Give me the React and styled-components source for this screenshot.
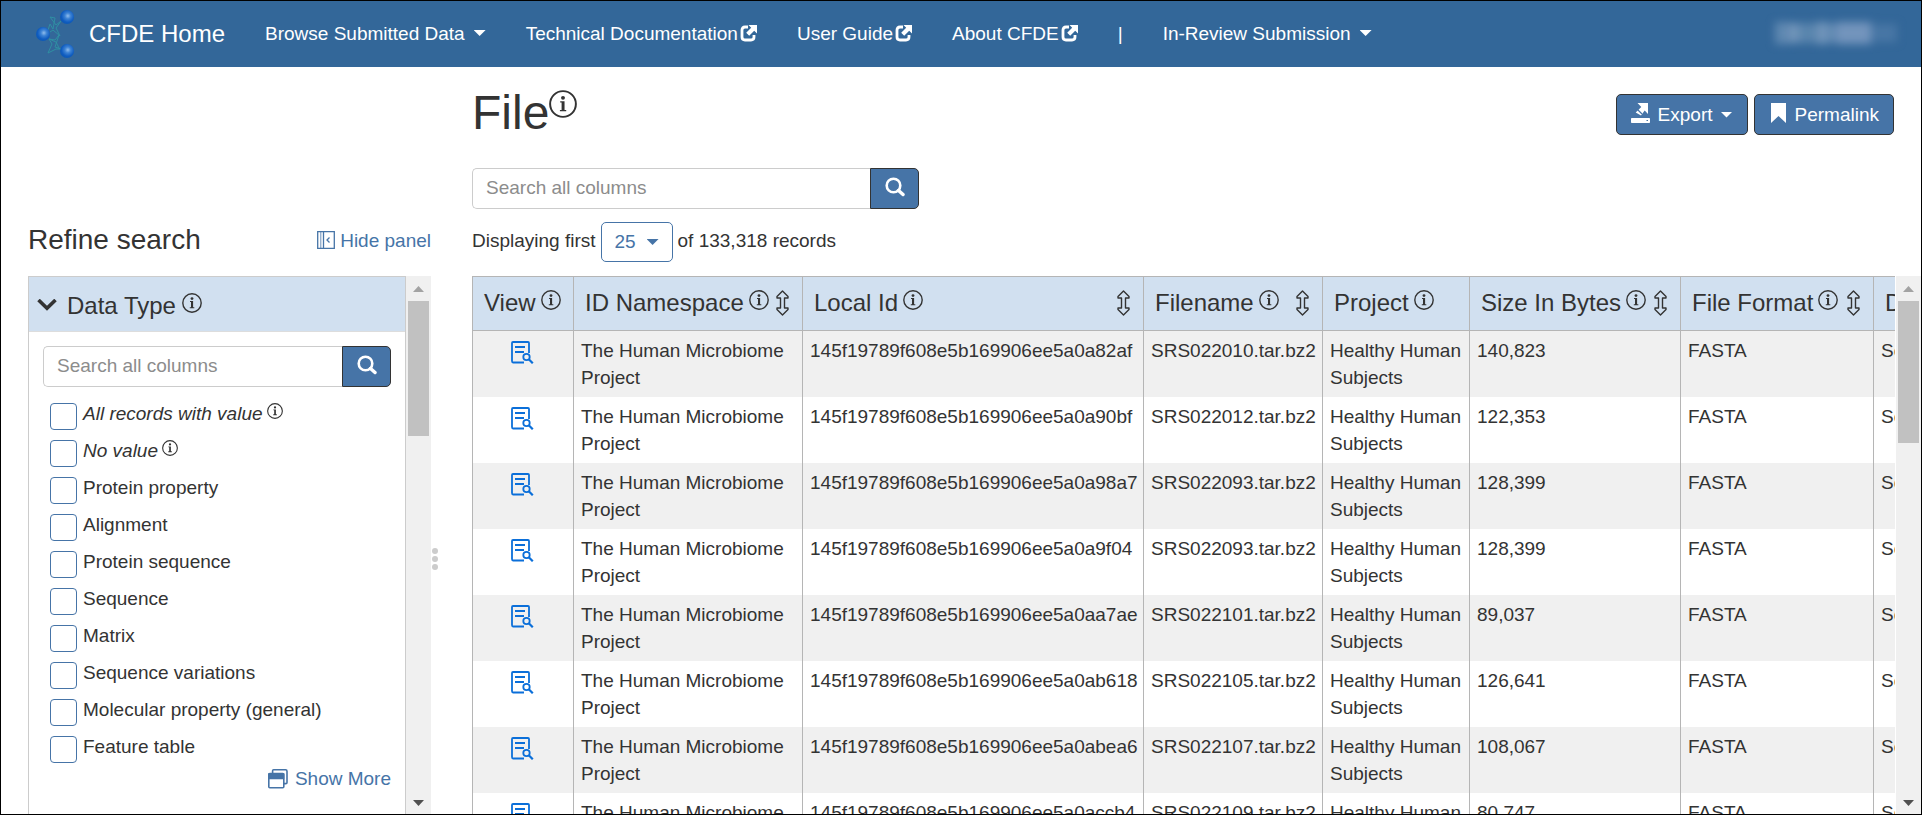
import React from 'react';
import styled, { createGlobalStyle, css } from 'styled-components';

const Global = createGlobalStyle`
  *, *::before, *::after { box-sizing: border-box; }
  body {
    margin: 0;
    background: #fff;
    color: #333;
    font-family: "Liberation Sans", Arial, Helvetica, sans-serif;
    font-size: 19px;
    line-height: 27px;
  }
  button, input, select { font: inherit; }
  h1, h2, h3 { margin: 0; font-weight: 400; }
  a { text-decoration: none; }
  svg { display: block; flex: none; }
`;

const Shell = styled.div`
  height: 100vh;
  display: flex;
  flex-direction: column;
  overflow: hidden;
  border: 1px solid #000;
`;

const NavBar = styled.nav`
  flex: none;
  height: 66px;
  display: flex;
  align-items: center;
  gap: 40px;
  padding: 0 24px 2px 33px;
  background: #336799;
  color: #fff;
  white-space: nowrap;
`;

const Brand = styled.a`
  display: flex;
  align-items: center;
  gap: 14px;
  color: #fff;
  font-size: 24px;
`;

const NavLink = styled.a`
  display: flex;
  align-items: center;
  gap: 2px;
  color: #fff;
`;

const NavMenu = styled.button`
  display: flex;
  align-items: center;
  gap: 9px;
  padding: 0;
  border: 0;
  background: none;
  color: #fff;
`;

const Caret = styled.span`
  width: 12px;
  height: 6px;
  background: currentColor;
  clip-path: polygon(0 0, 100% 0, 50% 100%);
`;

const UserName = styled.div`
  display: flex;
  align-items: center;
  margin-left: auto;
  filter: blur(4px);
`;

const Smudge = styled.span`
  width: ${(p) => p.$w}px;
  height: ${(p) => p.$h}px;
  background: ${(p) => p.$c};
`;

const Content = styled.main`
  flex: 1;
  min-height: 0;
  display: grid;
  grid-template-columns: 403px 8px minmax(0, 1fr);
  grid-template-rows: auto minmax(0, 1fr);
  padding-left: 27px;
`;

const SideHead = styled.div`
  display: flex;
  align-items: center;
  justify-content: space-between;
  align-self: end;
  height: 40px;
  margin-bottom: 16px;
`;

const SideTitle = styled.h2`
  font-size: 28px;
  line-height: 40px;
`;

const TextButton = styled.button`
  display: flex;
  align-items: center;
  gap: ${(p) => p.$gap}px;
  padding: 0;
  border: 0;
  background: none;
  color: #4674a7;
`;

const MainHead = styled.div`
  grid-column: 3;
  padding: 20px 27px 14px 33px;
`;

const TitleRow = styled.div`
  display: flex;
  justify-content: space-between;
  margin-bottom: 29px;
`;

const Title = styled.h1`
  display: flex;
  font-size: 48px;
  line-height: 52px;
  svg { margin-top: 3px; }
`;

const Actions = styled.div`
  display: flex;
  gap: 6px;
  margin: 7px 0 4px;
`;

const ActionButton = styled.button`
  display: flex;
  align-items: center;
  gap: 8px;
  height: 41px;
  padding: 0 14px;
  border: 1px solid #333;
  border-radius: 5px;
  background: #4674a7;
  color: #fff;
  svg { margin-bottom: 3px; }
`;

const SearchForm = styled.form`
  display: flex;
  width: ${(p) => p.$width};
  height: 41px;
`;

const SearchInput = styled.input`
  flex: 1;
  min-width: 0;
  padding: 0 13px 2px;
  border: 1px solid #ccc;
  border-right: 0;
  border-radius: 5px 0 0 5px;
  background: #fff;
  color: #333;
  &::placeholder { color: #8c8c8c; opacity: 1; }
`;

const SearchButton = styled.button`
  display: flex;
  justify-content: center;
  width: 49px;
  padding: 8px 0 0;
  border: 1px solid #333;
  border-radius: 0 5px 5px 0;
  background: #4674a7;
  color: #fff;
`;

const Summary = styled.div`
  display: flex;
  align-items: center;
  gap: 5px;
  height: 40px;
  margin-top: 13px;
`;

const SummaryText = styled.span`
  padding-bottom: 4px;
`;

const LimitPicker = styled.label`
  display: grid;
  align-items: center;
  color: #4674a7;
  > * { grid-area: 1 / 1; }
  ${Caret} { justify-self: end; margin-right: 14px; pointer-events: none; }
`;

const LimitSelect = styled.select`
  appearance: none;
  width: 72px;
  height: 40px;
  padding: 0 13px 2px;
  border: 1px solid #4674a7;
  border-radius: 5px;
  background: #fff;
  color: #4674a7;
`;

const SidePane = styled.aside`
  grid-column: 1;
  display: flex;
  min-height: 0;
`;

const FacetList = styled.div`
  flex: 1;
  overflow: hidden;
  border: 1px solid #ccc;
  border-bottom: 0;
`;

const FacetHead = styled.h3`
  display: flex;
  align-items: center;
  height: 55px;
  padding: 3px 8px 0;
  border-bottom: 1px solid #ddd;
  background: #d1e0f0;
  font-size: 24px;
`;

const FacetName = styled.span`
  margin: 0 6px 0 10px;
`;

const FacetBody = styled.div`
  padding: 14px 14px 0;
`;

const Options = styled.ul`
  display: flex;
  flex-direction: column;
  gap: 10px;
  margin: 16px 0 0;
  padding: 0 0 0 7px;
  list-style: none;
`;

const Option = styled.label`
  display: flex;
  height: 27px;
  gap: 6px;
  line-height: 22px;
  ${(p) => p.$special && css`font-style: italic;`}
`;

const Tick = styled.input`
  appearance: none;
  flex: none;
  width: 27px;
  height: 27px;
  margin: 0;
  border: 1px solid #4674a7;
  border-radius: 4px;
  background: #fff;
`;

const OptionName = styled.span`
  display: flex;
  gap: 4px;
`;

const More = styled.div`
  display: flex;
  justify-content: flex-end;
  margin-top: 2px;
`;

const Handle = styled.div`
  grid-column: 2;
  display: flex;
  flex-direction: column;
  align-items: center;
  justify-content: center;
  gap: 2px;
  padding-top: 28px;
`;

const Dot = styled.span`
  width: 6px;
  height: 6px;
  border-radius: 50%;
  background: #ccc;
`;

const ResultPane = styled.section`
  grid-column: 3;
  display: flex;
  gap: 1px;
  min-height: 0;
  padding-left: 33px;
`;

const TableClip = styled.div`
  flex: 1;
  min-width: 0;
  overflow: hidden;
`;

const Table = styled.table`
  width: 1602px;
  table-layout: fixed;
  border-collapse: separate;
  border-spacing: 0;
  border-left: 1px solid #b5b5b5;
`;

const Col = styled.col`
  width: ${(p) => p.$w}px;
`;

const Th = styled.th`
  height: 55px;
  padding: 0 13px 2px 11px;
  border: solid #b5b5b5;
  border-width: 1px 1px 1px 0;
  background: #d1e0f0;
  font-size: 24px;
  font-weight: 400;
  text-align: left;
  white-space: nowrap;
`;

const ThInner = styled.div`
  display: flex;
  align-items: center;
`;

const ThLabel = styled.span`
  margin-right: 5px;
`;

const IconUp = styled.span`
  padding-bottom: 5px;
`;

const SortButton = styled.button`
  margin-left: auto;
  padding: 0;
  border: 0;
  background: none;
  color: #333;
`;

const Row = styled.tr`
  &:nth-child(odd) { background: #f0f0f0; }
`;

const Td = styled.td`
  height: 66px;
  padding: 6px 0 6px 7px;
  border-right: 1px solid #b5b5b5;
  vertical-align: top;
`;

const ViewLink = styled.a`
  display: flex;
  justify-content: center;
  padding: 4px 9px 0 0;
  color: #0b6fd9;
`;

const Bar = styled.div`
  flex: none;
  display: flex;
  flex-direction: column;
  align-items: center;
  width: 25px;
  padding: 10px 0 8px;
  background: #f0f0f0;
`;

const Arrow = styled.span`
  width: 11px;
  height: 6px;
  background: ${(p) => (p.$up ? '#a3a3a3' : '#505050')};
  clip-path: ${(p) => (p.$up ? 'polygon(50% 0, 100% 100%, 0 100%)' : 'polygon(0 0, 100% 0, 50% 100%)')};
`;

const Thumb = styled.span`
  width: 21px;
  height: ${(p) => p.$h}px;
  margin: 9px 0 auto;
  background: #c1c1c1;
`;

function Scrollbar({ thumb }) {
  return (
    <Bar aria-hidden="true">
      <Arrow $up />
      <Thumb $h={thumb} />
      <Arrow />
    </Bar>
  );
}

function Logo() {
  return (
    <svg width="41" height="54" viewBox="0 0 41 54" aria-hidden="true">
      <defs>
        <radialGradient id="ball" cx="0.56" cy="0.42" r="0.6">
          <stop offset="0" stopColor="#8fbcec" />
          <stop offset="0.35" stopColor="#3c82d4" />
          <stop offset="0.75" stopColor="#0f5cc0" />
          <stop offset="1" stopColor="#0d58b4" />
        </radialGradient>
      </defs>
      <g fill="none" stroke="#2f8fa3" strokeWidth="1" strokeLinejoin="round">
        <path d="M14 24l2-6 3 5 2-11-5 -1 6 8 5-4-5 7 4 8-7-6-3 2" />
        <path d="M15 33l6 1 4-5-4 12 6 2-5 0-8 4 4-9-3-5 7 3 3 6" />
      </g>
      <circle cx="33" cy="11" r="7" fill="url(#ball)" />
      <circle cx="9" cy="28" r="7" fill="url(#ball)" />
      <circle cx="33" cy="45" r="7" fill="url(#ball)" />
    </svg>
  );
}

function External() {
  return (
    <svg width="17" height="17" viewBox="0 0 17 17" aria-hidden="true">
      <path d="M8 2H5Q2 2 2 5v7q0 3 3 3h6q3 0 3-3v-2" fill="none" stroke="#fff" strokeWidth="2.8" />
      <path d="M8.500 0H17v8.500l-2.800-2.800-5 5-3-3 5-5z" fill="#fff" />
    </svg>
  );
}

function Info({ size = 20 }) {
  return (
    <svg width={size} height={size} viewBox="0 0 20 20" role="img" aria-label="More information">
      <circle cx="10" cy="10" r="9.200" fill="none" stroke="currentColor" strokeWidth="1.400" />
      <circle cx="10" cy="5.600" r="1.400" fill="currentColor" />
      <path d="M8 8h3.100v6.200h1.200v1H7.800v-1H9V9H8z" fill="currentColor" />
    </svg>
  );
}

function Magnifier() {
  return (
    <svg width="20" height="20" viewBox="0 0 20 20" fill="none" stroke="currentColor" aria-hidden="true">
      <circle cx="8.500" cy="8.500" r="6.800" strokeWidth="2.600" />
      <path d="M13.500 13.500l4.500 4" strokeWidth="3.400" strokeLinecap="round" />
    </svg>
  );
}

function ExportIcon() {
  return (
    <svg width="19" height="20" viewBox="0 0 19 20" fill="#fff" aria-hidden="true">
      <path d="M6.500 0H17v11l-3.300-3.500-3.700 5-5.300-3 5.600-5.500z" />
      <path d="M6 6l5 5" stroke="#4674a7" strokeWidth="1.200" />
      <path d="M.8 15h17.400q.8 0 .8.800v3.400q0 .8-.8.800H.8q-.8 0-.8-.8v-3.400q0-.8.8-.8zM15.500 17v1H17v-1z" fillRule="evenodd" />
    </svg>
  );
}

function Bookmark() {
  return (
    <svg width="18" height="20" viewBox="0 0 18 20" aria-hidden="true">
      <path d="M2 0h15v20l-7.500-7L2 20z" fill="#fff" />
    </svg>
  );
}

function PanelIcon() {
  return (
    <svg width="18" height="18" viewBox="0 0 18 18" fill="none" stroke="currentColor" strokeWidth="1.300" aria-hidden="true">
      <path d="M.7.7h16.600v16.600H.7zM6.500 1v16M12.500 6.500L10 9l2.500 2.500" />
      <path d="M3.800 1v16" strokeWidth="0.800" />
    </svg>
  );
}

function Windows() {
  return (
    <svg width="20" height="20" viewBox="0 0 20 20" fill="none" stroke="currentColor" strokeWidth="1.600" aria-hidden="true">
      <path d="M4.600 4V1.800q0-1 1-1h12q1.400 0 1.400 1.400v11.200q0 1.200-1.200 1.200H16" />
      <path d="M.8 5.600q0-1 1-1h13q1 0 1 1v12.200q0 1-1 1h-13q-1 0-1-1z" />
      <path d="M1 5h14.500v4.500H1z" fill="currentColor" />
    </svg>
  );
}

function Chevron() {
  return (
    <svg width="20" height="13" viewBox="0 0 20 13" aria-hidden="true">
      <path d="M1.500 1L10 9.200 18.500 1" fill="none" stroke="#333" strokeWidth="3.600" />
    </svg>
  );
}

function SortIcon() {
  return (
    <svg width="13" height="26" viewBox="0 0 13 26" fill="none" stroke="currentColor" strokeWidth="1.400" strokeLinejoin="round" aria-hidden="true">
      <path d="M6.500 1L12 6.500V8H8.500v10H12v1.500L6.500 25 1 19.500V18h3.500V8H1V6.500z" />
    </svg>
  );
}

function ViewIcon() {
  return (
    <svg width="23" height="23" viewBox="0 0 23 23" fill="none" stroke="currentColor" strokeWidth="1.800" aria-hidden="true">
      <path d="M18 12V2q0-1-1-1H2Q1 1 1 2v18q0 1.500 1 1.500h11M4 6h10M4 11h9" />
      <circle cx="15.500" cy="16" r="3.200" />
      <path d="M17.800 18.300l4 4" strokeWidth="2.200" />
    </svg>
  );
}

function Search({ width, label }) {
  return (
    <SearchForm $width={width} role="search" onSubmit={(e) => e.preventDefault()}>
      <SearchInput type="text" placeholder="Search all columns" aria-label={label} />
      <SearchButton type="submit" aria-label="Search"><Magnifier /></SearchButton>
    </SearchForm>
  );
}

const options = [
  { name: 'All records with value', special: true },
  { name: 'No value', special: true },
  { name: 'Protein property' },
  { name: 'Alignment' },
  { name: 'Protein sequence' },
  { name: 'Sequence' },
  { name: 'Matrix' },
  { name: 'Sequence variations' },
  { name: 'Molecular property (general)' },
  { name: 'Feature table' },
];

const columns = [
  { name: 'View', width: 101 },
  { name: 'ID Namespace', width: 229, sort: true },
  { name: 'Local Id', width: 341, sort: true },
  { name: 'Filename', width: 179, sort: true },
  { name: 'Project', width: 147 },
  { name: 'Size In Bytes', width: 211, sort: true },
  { name: 'File Format', width: 193, sort: true },
  { name: 'Data Type', width: 200, sort: true },
];

const records = [
  ['0a82af', 'SRS022010', '140,823'],
  ['0a90bf', 'SRS022012', '122,353'],
  ['0a98a7', 'SRS022093', '128,399'],
  ['0a9f04', 'SRS022093', '128,399'],
  ['0aa7ae', 'SRS022101', '89,037'],
  ['0ab618', 'SRS022105', '126,641'],
  ['0abea6', 'SRS022107', '108,067'],
  ['0accb4', 'SRS022109', '80,747'],
];

export default function App() {
  return (
    <>
      <Global />
      <Shell>
        <NavBar>
          <Brand href="#home"><Logo />CFDE Home</Brand>
          <NavMenu type="button">Browse Submitted Data<Caret /></NavMenu>
          <NavLink href="#docs">Technical Documentation<External /></NavLink>
          <NavLink href="#guide">User Guide<External /></NavLink>
          <NavLink href="#about">About CFDE<External /></NavLink>
          <span>|</span>
          <NavMenu type="button">In-Review Submission<Caret /></NavMenu>
          <UserName aria-label="Signed-in user">
            <Smudge $w={14} $h={22} $c="#5f88b1" />
            <Smudge $w={10} $h={20} $c="#7194b9" />
            <Smudge $w={18} $h={20} $c="#5a85ae" />
            <Smudge $w={10} $h={22} $c="#7094ba" />
            <Smudge $w={10} $h={20} $c="#6189b2" />
            <Smudge $w={34} $h={22} $c="#7394bc" />
            <Smudge $w={26} $h={18} $c="#4876a5" />
          </UserName>
        </NavBar>
        <Content>
          <SideHead>
            <SideTitle>Refine search</SideTitle>
            <TextButton type="button" $gap={5}><PanelIcon />Hide panel</TextButton>
          </SideHead>
          <MainHead>
            <TitleRow>
              <Title>File<Info size={28} /></Title>
              <Actions>
                <ActionButton type="button"><ExportIcon />Export<Caret /></ActionButton>
                <ActionButton type="button"><Bookmark />Permalink</ActionButton>
              </Actions>
            </TitleRow>
            <Search width="447px" label="Search files" />
            <Summary>
              <SummaryText>Displaying first</SummaryText>
              <LimitPicker>
                <LimitSelect aria-label="Records per page" defaultValue="25">
                  <option>10</option>
                  <option>25</option>
                  <option>50</option>
                </LimitSelect>
                <Caret />
              </LimitPicker>
              <SummaryText>of 133,318 records</SummaryText>
            </Summary>
          </MainHead>
          <SidePane>
            <FacetList>
              <FacetHead><Chevron /><FacetName>Data Type</FacetName><IconUp><Info /></IconUp></FacetHead>
              <FacetBody>
                <Search width="100%" label="Search data types" />
                <Options>
                  {options.map((o) => (
                    <li key={o.name}>
                      <Option $special={o.special}>
                        <Tick type="checkbox" />
                        <OptionName>
                          {o.name}
                          {o.special && <Info size={16} />}
                        </OptionName>
                      </Option>
                    </li>
                  ))}
                </Options>
                <More>
                  <TextButton type="button" $gap={7}><Windows />Show More</TextButton>
                </More>
              </FacetBody>
            </FacetList>
            <Scrollbar thumb={135} />
          </SidePane>
          <Handle><Dot /><Dot /><Dot /></Handle>
          <ResultPane>
            <TableClip>
              <Table>
                <colgroup>{columns.map((c) => <Col key={c.name} $w={c.width} />)}</colgroup>
                <thead>
                  <tr>
                    {columns.map((c) => (
                      <Th key={c.name} scope="col">
                        <ThInner>
                          <ThLabel>{c.name}</ThLabel>
                          <IconUp><Info /></IconUp>
                          {c.sort && <SortButton type="button" aria-label={`Sort by ${c.name}`}><SortIcon /></SortButton>}
                        </ThInner>
                      </Th>
                    ))}
                  </tr>
                </thead>
                <tbody>
                  {records.map(([id, file, size]) => (
                    <Row key={id}>
                      <Td><ViewLink href={`#${id}`} aria-label="View record"><ViewIcon /></ViewLink></Td>
                      <Td>The Human Microbiome Project</Td>
                      <Td>145f19789f608e5b169906ee5a{id}</Td>
                      <Td>{file}.tar.bz2</Td>
                      <Td>Healthy Human Subjects</Td>
                      <Td>{size}</Td>
                      <Td>FASTA</Td>
                      <Td>Sequence</Td>
                    </Row>
                  ))}
                </tbody>
              </Table>
            </TableClip>
            <Scrollbar thumb={142} />
          </ResultPane>
        </Content>
      </Shell>
    </>
  );
}
